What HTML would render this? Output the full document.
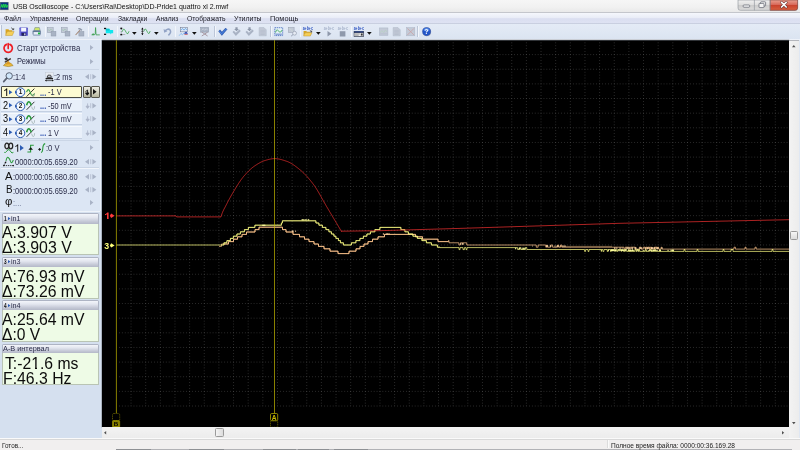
<!DOCTYPE html>
<html><head><meta charset="utf-8"><title>USB Oscilloscope</title>
<style>
html,body{margin:0;padding:0;}
body{width:800px;height:450px;overflow:hidden;background:#d9e4f2;position:relative;font-family:"Liberation Sans",sans-serif;}
.b{position:absolute;box-sizing:border-box;}
.t{position:absolute;white-space:nowrap;line-height:1;transform-origin:0 50%;font-family:"Liberation Sans",sans-serif;}
svg{overflow:visible;}
#w{position:absolute;left:0;top:0;width:800px;height:450px;overflow:hidden;filter:blur(0.45px);will-change:transform;}
</style></head><body><div id="w">
<div class="b" style="left:0.00px;top:0.00px;width:800.00px;height:12.30px;background:linear-gradient(#f6f6f6,#f1f1f1 60%,#e9e9e9);"></div>
<div class="b" style="left:0.00px;top:12.00px;width:800.00px;height:0.70px;background:#c4c6cc;"></div>
<svg class="b" style="left:0.00px;top:1.90px;" width="8.60" height="8.10" viewBox="0 0 8.6 8.1"><rect x="0" y="0" width="8.6" height="8.1" fill="#6a7480"/><rect x="0.5" y="0.6" width="7.6" height="6.8" fill="#0c3484"/><path d="M0.8 5.6 L1.8 2.4 L2.8 5.6 L3.8 2.0 L4.8 5.6 L5.8 2.2 L6.8 5.6 L7.6 3.2" fill="none" stroke="#1fd84a" stroke-width="1.0"/><path d="M0.8 4.2 H7.8" stroke="#1fd84a" stroke-width="0.5" stroke-dasharray="0.8 0.8"/></svg>
<span class="t" style="left:12.60px;top:2.55px;font-size:7.30px;color:#101010;transform:scaleX(0.9584);">USB Oscilloscope - C:\Users\Rai\Desktop\DD-Pride1 quattro xl 2.mwf</span>
<svg class="b" style="left:738.00px;top:0.00px;" width="60.00" height="10.60" viewBox="0 0 60 10.6"><defs><linearGradient id="wg" x1="0" y1="0" x2="0" y2="1"><stop offset="0" stop-color="#f0f0f0"/><stop offset="0.48" stop-color="#dedede"/><stop offset="0.52" stop-color="#cccccc"/><stop offset="1" stop-color="#dcdcdc"/></linearGradient><linearGradient id="wr" x1="0" y1="0" x2="0" y2="1"><stop offset="0" stop-color="#e8a090"/><stop offset="0.45" stop-color="#d8695a"/><stop offset="0.5" stop-color="#c8412c"/><stop offset="1" stop-color="#d86040"/></linearGradient></defs><path d="M0 0 H59.6 V8 Q59.6 10.3 57.2 10.3 H2.4 Q0 10.3 0 8 Z" fill="url(#wg)" stroke="#8a8e96" stroke-width="0.6"/><path d="M32.2 0 H59.6 V8 Q59.6 10.3 57.2 10.3 H32.2 Z" fill="url(#wr)" stroke="#7a3a34" stroke-width="0.6"/><path d="M16.4 0 V10.3 M32.2 0 V10.3" stroke="#8a8e96" stroke-width="0.6"/><rect x="5.2" y="5" width="6.4" height="2.2" rx="0.6" fill="#fafafa" stroke="#5a5e6a" stroke-width="0.7"/><rect x="22.6" y="1.8" width="5" height="4.2" rx="0.6" fill="#f4f4f4" stroke="#5a5e6a" stroke-width="0.7"/><rect x="21" y="3.4" width="5" height="4.2" rx="0.6" fill="#f4f4f4" stroke="#5a5e6a" stroke-width="0.7"/><path d="M43.6 2.4 L48.2 7.0 M48.2 2.4 L43.6 7.0" stroke="#5a2a2a" stroke-width="2.7" stroke-linecap="round"/><path d="M43.6 2.4 L48.2 7.0 M48.2 2.4 L43.6 7.0" stroke="#fcfcfc" stroke-width="1.7" stroke-linecap="round"/></svg>
<div class="b" style="left:0.00px;top:12.70px;width:800.00px;height:10.90px;background:linear-gradient(#f5f7fc 0%,#eaedf7 42%,#dadef0 52%,#dfe3f3 100%);"></div>
<div class="b" style="left:0.00px;top:23.20px;width:800.00px;height:0.60px;background:#c9cfe0;"></div>
<span class="t" style="left:4.40px;top:14.90px;font-size:7.20px;color:#1c1c24;transform:scaleX(0.9604);">Файл</span>
<span class="t" style="left:29.60px;top:14.90px;font-size:7.20px;color:#1c1c24;transform:scaleX(0.9594);">Управление</span>
<span class="t" style="left:76.40px;top:14.90px;font-size:7.20px;color:#1c1c24;transform:scaleX(0.9679);">Операции</span>
<span class="t" style="left:117.60px;top:14.90px;font-size:7.20px;color:#1c1c24;transform:scaleX(0.9434);">Закладки</span>
<span class="t" style="left:155.60px;top:14.90px;font-size:7.20px;color:#1c1c24;transform:scaleX(0.9215);">Анализ</span>
<span class="t" style="left:187.00px;top:14.90px;font-size:7.20px;color:#1c1c24;transform:scaleX(0.9492);">Отображать</span>
<span class="t" style="left:234.00px;top:14.90px;font-size:7.20px;color:#1c1c24;transform:scaleX(0.9654);">Утилиты</span>
<span class="t" style="left:270.00px;top:14.90px;font-size:7.20px;color:#1c1c24;transform:scaleX(1.0213);">Помощь</span>
<div class="b" style="left:0.00px;top:23.80px;width:800.00px;height:15.60px;background:linear-gradient(#e4ebf6,#dbe4f1);"></div>
<div class="b" style="left:0.00px;top:39.00px;width:800.00px;height:0.90px;background:#eef2f9;"></div>
<div class="b" style="left:0.30px;top:25.00px;width:1.60px;height:13.00px;background:#f2f5fb;border-right:0.5px solid #b9c3d6;"></div>
<div class="b" style="left:44.50px;top:26.00px;width:0.70px;height:11.40px;background:#bcc6d8;"></div>
<div class="b" style="left:45.20px;top:26.00px;width:0.60px;height:11.40px;background:#f3f6fb;"></div>
<div class="b" style="left:87.70px;top:26.00px;width:0.70px;height:11.40px;background:#bcc6d8;"></div>
<div class="b" style="left:88.40px;top:26.00px;width:0.60px;height:11.40px;background:#f3f6fb;"></div>
<div class="b" style="left:116.60px;top:26.00px;width:0.70px;height:11.40px;background:#bcc6d8;"></div>
<div class="b" style="left:117.30px;top:26.00px;width:0.60px;height:11.40px;background:#f3f6fb;"></div>
<div class="b" style="left:174.60px;top:26.00px;width:0.70px;height:11.40px;background:#bcc6d8;"></div>
<div class="b" style="left:175.30px;top:26.00px;width:0.60px;height:11.40px;background:#f3f6fb;"></div>
<div class="b" style="left:214.00px;top:26.00px;width:0.70px;height:11.40px;background:#bcc6d8;"></div>
<div class="b" style="left:214.70px;top:26.00px;width:0.60px;height:11.40px;background:#f3f6fb;"></div>
<div class="b" style="left:270.00px;top:26.00px;width:0.70px;height:11.40px;background:#bcc6d8;"></div>
<div class="b" style="left:270.70px;top:26.00px;width:0.60px;height:11.40px;background:#f3f6fb;"></div>
<div class="b" style="left:299.60px;top:26.00px;width:0.70px;height:11.40px;background:#bcc6d8;"></div>
<div class="b" style="left:300.30px;top:26.00px;width:0.60px;height:11.40px;background:#f3f6fb;"></div>
<div class="b" style="left:350.50px;top:26.00px;width:0.70px;height:11.40px;background:#bcc6d8;"></div>
<div class="b" style="left:351.20px;top:26.00px;width:0.60px;height:11.40px;background:#f3f6fb;"></div>
<div class="b" style="left:417.40px;top:26.00px;width:0.70px;height:11.40px;background:#bcc6d8;"></div>
<div class="b" style="left:418.10px;top:26.00px;width:0.60px;height:11.40px;background:#f3f6fb;"></div>
<svg class="b" style="left:5.30px;top:27.00px;" width="9.40" height="9.40" viewBox="0 0 16 16"><path d="M1 4 H6 L7 5.5 H12 V8 H4 L1 14 Z" fill="#d9a520"/><path d="M1 14.5 L4 7.5 H15.5 L12.5 14.5 Z" fill="#f6cf56" stroke="#b98a1c" stroke-width="0.7"/><path d="M10.5 1.2 L14.8 4.6 M14.8 4.6 L14.9 1.9 M14.8 4.6 L12 4.6" stroke="#333" stroke-width="1.2" fill="none"/></svg>
<svg class="b" style="left:18.80px;top:27.00px;" width="9.40" height="9.40" viewBox="0 0 16 16"><rect x="1" y="1" width="14" height="14" rx="1" fill="#4b48c2"/><rect x="3.6" y="1.4" width="8.8" height="6.4" fill="#f4f6ff"/><rect x="4.4" y="10" width="7.6" height="5" fill="#24245c"/><rect x="8.8" y="10.8" width="2.2" height="3.4" fill="#d8dcf4"/><rect x="1" y="1" width="2" height="14" fill="#7a78e0"/></svg>
<svg class="b" style="left:32.20px;top:27.00px;" width="9.40" height="9.40" viewBox="0 0 16 16"><path d="M5 1 H12.5 L14 6 H3.4 Z" fill="#cfe86a" stroke="#5d7088" stroke-width="0.8"/><rect x="1" y="6" width="14" height="7" rx="1" fill="#5f7896"/><rect x="2.6" y="8.6" width="10.8" height="4.8" fill="#e8eef6"/><rect x="10.2" y="9.4" width="3.4" height="3.2" fill="#18b838"/><rect x="2" y="13" width="12" height="1.8" fill="#8aa0ba"/></svg>
<svg class="b" style="left:47.20px;top:27.00px;" width="9.40" height="9.40" viewBox="0 0 16 16"><rect x="0.5" y="1" width="10" height="8.6" fill="#c3cad7" stroke="#8f99ab" stroke-width="0.8"/><path d="M1.5 4 L4 6.4 L6.5 3.4 L9.6 6.6" stroke="#94c2a4" stroke-width="0.9" fill="none"/><rect x="7" y="7.4" width="8.2" height="8" fill="#a9b3c4" stroke="#8f99ab" stroke-width="0.8"/></svg>
<svg class="b" style="left:61.00px;top:27.00px;" width="9.40" height="9.40" viewBox="0 0 16 16"><rect x="0.5" y="1" width="10" height="8.6" fill="#c3cad7" stroke="#8f99ab" stroke-width="0.8"/><path d="M1.5 4 L4 6.4 L6.5 3.4 L9.6 6.6" stroke="#94c2a4" stroke-width="0.9" fill="none"/><rect x="7" y="7.4" width="8.2" height="8" fill="#a9b3c4" stroke="#8f99ab" stroke-width="0.8"/></svg>
<svg class="b" style="left:75.00px;top:27.00px;" width="9.40" height="9.40" viewBox="0 0 16 16"><rect x="6.6" y="7.6" width="8.6" height="7.8" fill="#a9b3c4" stroke="#8f99ab" stroke-width="0.8"/><path d="M1 13.6 L8.6 5.2" stroke="#a58a7a" stroke-width="1.8"/><path d="M5.4 2.2 Q9 0.6 12.6 4.6 L10.6 6.8 Q8.6 3.6 5.4 4 Z" fill="#8f99ab"/></svg>
<svg class="b" style="left:90.80px;top:27.00px;" width="9.40" height="9.40" viewBox="0 0 16 16"><path d="M1 13.4 H5.4 L7.2 12 L7.8 1 L8.6 13.4 H15" stroke="#2f9a44" stroke-width="1.3" fill="none"/><path d="M2 13.4 L3.6 11.2 L5.4 13.4" stroke="#2f9a44" stroke-width="1" fill="#2f9a44"/></svg>
<svg class="b" style="left:104.00px;top:27.00px;" width="9.40" height="9.40" viewBox="0 0 16 16"><path d="M3 3 H9 L10.6 5 H15.6 V10.6 H12.6 L11.6 12.6 L10.4 10.6 H3 Z" fill="#10e6ee"/><path d="M3 3 H9.2 V6 H3 Z" fill="#0fc2cc"/><rect x="0" y="1.4" width="3.6" height="2.2" fill="#111"/><rect x="0" y="11.4" width="3.6" height="2.2" fill="#111"/></svg>
<svg class="b" style="left:119.60px;top:27.00px;" width="9.40" height="9.40" viewBox="0 0 16 16"><path d="M2.2 1.2 V14.6" stroke="#111" stroke-width="1" stroke-dasharray="1.2 1.6"/><rect x="0.6" y="1.2" width="3.2" height="2.4" fill="#111"/><rect x="0.6" y="11.8" width="3.2" height="2.4" fill="#111"/><path d="M4 12.8 H9" stroke="#777" stroke-width="0.8"/><path d="M4 8 Q5.6 0.6 8.4 5.4 T12 11.4 Q13.6 12.8 15.4 7.2" stroke="#30a040" stroke-width="1.3" fill="none"/></svg>
<svg class="b" style="left:132.45px;top:32.00px;" width="4.70" height="2.80" viewBox="0 0 4.7 2.8"><path d="M0 0 H4.7 L2.35 2.8 Z" fill="#111"/></svg>
<svg class="b" style="left:141.40px;top:27.00px;" width="9.40" height="9.40" viewBox="0 0 16 16"><path d="M2.4 1.6 V13.4" stroke="#111" stroke-width="1.1"/><path d="M0.4 4.2 L2.4 1 L4.4 4.2 Z M0.4 10.8 L2.4 14 L4.4 10.8 Z" fill="#111"/><path d="M0.4 7.4 H4.6" stroke="#111" stroke-width="1"/><path d="M5 7.4 Q6.6 0.4 9.2 5.4 T12.6 11 Q14 12.4 15.6 7" stroke="#30a040" stroke-width="1.3" fill="none"/></svg>
<svg class="b" style="left:154.35px;top:32.00px;" width="4.70" height="2.80" viewBox="0 0 4.7 2.8"><path d="M0 0 H4.7 L2.35 2.8 Z" fill="#111"/></svg>
<svg class="b" style="left:163.40px;top:27.00px;" width="9.40" height="9.40" viewBox="0 0 16 16"><path d="M3 7.4 Q8.4 1.2 12.2 5.2 Q14.6 9 9.2 14.2" stroke="#93a4c6" stroke-width="2.6" fill="none"/><path d="M1 3.2 L2 9.8 L7.6 7.4 Z" fill="#93a4c6"/></svg>
<svg class="b" style="left:178.80px;top:27.00px;" width="9.40" height="9.40" viewBox="0 0 16 16"><rect x="2.6" y="0.6" width="11.6" height="7.6" fill="#dfe6f2" stroke="#6a7690" stroke-width="0.9"/><path d="M3.4 5.4 L6 2.6 L8.6 5.4 L11.2 2.4 L13.6 5" stroke="#2a8ae8" stroke-width="1" fill="none"/><path d="M0.6 14.4 L3.4 11 L6 13.4 L9 9.6" stroke="#2a8ae8" stroke-width="1.1" fill="none" stroke-dasharray="1.6 0.8"/><path d="M8.4 11.4 H15.4 L12 7.6 Z" fill="#2a3ca8"/><path d="M9.2 12.8 H14.8" stroke="#c03030" stroke-width="1"/></svg>
<svg class="b" style="left:191.65px;top:32.00px;" width="4.70" height="2.80" viewBox="0 0 4.7 2.8"><path d="M0 0 H4.7 L2.35 2.8 Z" fill="#111"/></svg>
<svg class="b" style="left:200.40px;top:27.00px;" width="9.40" height="9.40" viewBox="0 0 16 16"><rect x="1.2" y="0.8" width="13.6" height="8" fill="#a9b3c4" stroke="#8f99ab" stroke-width="0.9"/><path d="M3 5.6 L5.6 3 L8 5.6 L10.6 3 L13 5.4" stroke="#dfe4ee" stroke-width="0.9" fill="none"/><path d="M3 8.6 L13 15.4 M13 8.6 L3 15.4" stroke="#a89aa4" stroke-width="1.7"/></svg>
<svg class="b" style="left:217.60px;top:27.00px;" width="9.40" height="9.40" viewBox="0 0 16 16"><path d="M1 7.2 L3.6 4.8 L6.6 8.6 L13 1.8 L15.4 4.2 L6.6 14.4 Z" fill="#2d63c4" stroke="#1c428e" stroke-width="0.6"/><path d="M2.4 7.2 L6.4 11.4 L14 3.6" stroke="#6ea0ee" stroke-width="1" fill="none"/></svg>
<svg class="b" style="left:231.60px;top:27.00px;" width="9.40" height="9.40" viewBox="0 0 16 16"><path d="M0.8 8.6 L3.2 6.4 L6.6 10 L12.6 4.4 L15 6.8 L6.6 15.2 Z" fill="#a9b3c4"/><path d="M5.8 0.6 H9.6 V3.4 H11.8 L7.7 7.2 L3.6 3.4 H5.8 Z" fill="#8f99ab"/></svg>
<svg class="b" style="left:245.00px;top:27.00px;" width="9.40" height="9.40" viewBox="0 0 16 16"><path d="M0.8 8.6 L3.2 6.4 L6.6 10 L12.6 4.4 L15 6.8 L6.6 15.2 Z" fill="#a9b3c4"/><path d="M5.8 0.6 H9.6 V3.4 H11.8 L7.7 7.2 L3.6 3.4 H5.8 Z" fill="#8f99ab"/></svg>
<svg class="b" style="left:258.00px;top:27.00px;" width="9.40" height="9.40" viewBox="0 0 16 16"><path d="M2 1 H10.2 L14 4.8 V15 H2 Z" fill="#c3cad7" stroke="#a9b3c4" stroke-width="0.8"/><path d="M4 5.6 H11.6 M4 8 H11.6 M4 10.4 H11.6 M4 12.8 H11.6" stroke="#a9b3c4" stroke-width="0.7"/></svg>
<svg class="b" style="left:273.90px;top:27.00px;" width="9.40" height="9.40" viewBox="0 0 16 16"><rect x="1.4" y="1.2" width="13.4" height="13.4" fill="#e4f0f6" stroke="#2c56b8" stroke-width="1.2" stroke-dasharray="2.2 1.1"/><path d="M2.6 9.4 Q4.6 2.2 7.2 6.2 T11 8.4 Q12.4 9 13.8 5" stroke="#2aa048" stroke-width="1.3" fill="none"/><path d="M2.6 12.2 H13.4" stroke="#2c56b8" stroke-width="1.2"/></svg>
<svg class="b" style="left:287.60px;top:27.00px;" width="9.40" height="9.40" viewBox="0 0 16 16"><rect x="0.8" y="0.8" width="9.6" height="8.6" fill="#c3cad7" stroke="#8f99ab" stroke-width="0.8"/><path d="M1.6 2 L9.4 8.4" stroke="#cfe0d4" stroke-width="0.8"/><circle cx="11.2" cy="10.6" r="3.3" fill="#e6ebf3" stroke="#8f99ab" stroke-width="1.1"/><path d="M8.6 12.8 L5.4 15.6" stroke="#8f99ab" stroke-width="1.6"/></svg>
<svg class="b" style="left:302.80px;top:27.00px;" width="9.40" height="9.40" viewBox="0 0 16 16"><text x="-0.6" y="5.0" font-family="Liberation Sans" font-weight="bold" font-size="8.4" textLength="17.4" lengthAdjust="spacingAndGlyphs" fill="#2a50c0">a+b+c</text><path d="M1 7 H5.6 L6.6 8.2 H12 V10 H4 L1 15 Z" fill="#d9a520"/><path d="M1 15.4 L4 9.6 H15.4 L12.4 15.4 Z" fill="#f6cf56" stroke="#b98a1c" stroke-width="0.7"/><path d="M11.6 5.6 L14.8 8.4 M14.8 8.4 V6.2 M14.8 8.4 H12.6" stroke="#222" stroke-width="1.1" fill="none"/></svg>
<svg class="b" style="left:315.95px;top:32.00px;" width="4.70" height="2.80" viewBox="0 0 4.7 2.8"><path d="M0 0 H4.7 L2.35 2.8 Z" fill="#111"/></svg>
<svg class="b" style="left:324.40px;top:27.00px;" width="9.40" height="9.40" viewBox="0 0 16 16"><text x="-0.6" y="5.0" font-family="Liberation Sans" font-weight="bold" font-size="8.4" textLength="17.4" lengthAdjust="spacingAndGlyphs" fill="#a6b2ca">a+b+c</text><path d="M6 7 L12.6 11.6 L6 16.2 Z" fill="#8f99ab"/></svg>
<svg class="b" style="left:338.40px;top:27.00px;" width="9.40" height="9.40" viewBox="0 0 16 16"><text x="-0.6" y="5.0" font-family="Liberation Sans" font-weight="bold" font-size="8.4" textLength="17.4" lengthAdjust="spacingAndGlyphs" fill="#a6b2ca">a+b+c</text><rect x="3" y="7.2" width="9.6" height="9" fill="#8f99ab"/></svg>
<svg class="b" style="left:353.80px;top:27.00px;" width="9.40" height="9.40" viewBox="0 0 16 16"><text x="-0.6" y="5.0" font-family="Liberation Sans" font-weight="bold" font-size="8.4" textLength="17.4" lengthAdjust="spacingAndGlyphs" fill="#2a50c0">a+b+c</text><rect x="-0.4" y="7" width="17.2" height="9.6" fill="#20283e"/><rect x="0.6" y="10" width="15.2" height="5.6" fill="#f0f0f0"/><rect x="0.4" y="7.6" width="15.6" height="1.5" fill="#3858a8"/><path d="M1.6 11.8 H10 M1.6 14 H8" stroke="#555" stroke-width="0.9"/><rect x="11.6" y="11" width="3.2" height="3.6" fill="#333"/></svg>
<svg class="b" style="left:366.85px;top:32.00px;" width="4.70" height="2.80" viewBox="0 0 4.7 2.8"><path d="M0 0 H4.7 L2.35 2.8 Z" fill="#111"/></svg>
<svg class="b" style="left:378.50px;top:27.00px;" width="9.40" height="9.40" viewBox="0 0 16 16"><rect x="0.8" y="1.6" width="14.4" height="12.6" fill="#c3cad7" stroke="#a9b3c4" stroke-width="0.8"/><path d="M2 10 L5 6 L8 9.4 L11 5 L14 8.6" stroke="#b4d2bc" stroke-width="1" fill="none"/><path d="M1.6 11.8 H14.4" stroke="#a9b3c4" stroke-width="0.7"/></svg>
<svg class="b" style="left:392.20px;top:27.00px;" width="9.40" height="9.40" viewBox="0 0 16 16"><path d="M2 1 H10.2 L14 4.8 V15 H2 Z" fill="#c3cad7" stroke="#a9b3c4" stroke-width="0.8"/><path d="M4 5.6 H11.6 M4 8 H11.6 M4 10.4 H11.6 M4 12.8 H11.6" stroke="#a9b3c4" stroke-width="0.7"/></svg>
<svg class="b" style="left:405.60px;top:27.00px;" width="9.40" height="9.40" viewBox="0 0 16 16"><rect x="1" y="1" width="14" height="14" fill="#c3cad7" stroke="#a9b3c4" stroke-width="0.8"/><path d="M2.4 2.4 L13.6 13.6 M13.6 2.4 L2.4 13.6" stroke="#c9a4a8" stroke-width="1.4"/></svg>
<svg class="b" style="left:422.00px;top:27.00px;" width="9.40" height="9.40" viewBox="0 0 16 16"><circle cx="8.6" cy="9" r="6.8" fill="#9aa2b4" opacity="0.55"/><circle cx="7.8" cy="7.8" r="6.9" fill="#2356c8" stroke="#15378a" stroke-width="0.7"/><ellipse cx="7.8" cy="4.6" rx="5" ry="2.8" fill="#6a9cf0" opacity="0.75"/><text x="7.8" y="11.8" text-anchor="middle" font-family="Liberation Sans" font-weight="bold" font-size="11" fill="#fff">?</text></svg>
<div class="b" style="left:0.00px;top:39.90px;width:101.80px;height:398.00px;background:#d5e0ef;"></div>
<div class="b" style="left:0.00px;top:39.90px;width:99.60px;height:171.60px;background:#dce6f4;"></div>
<div class="b" style="left:99.60px;top:39.90px;width:0.50px;height:171.60px;background:#e9eff8;"></div>
<svg class="b" style="left:2.90px;top:43.20px;" width="10.40" height="10.40" viewBox="0 0 10.4 10.4"><path d="M3.5 1.35 A4.2 4.2 0 1 0 6.9 1.35" fill="none" stroke="#ee1c24" stroke-width="1.7" stroke-linecap="round"/><path d="M5.2 0.5 V5.6" stroke="#ee1c24" stroke-width="1.6" stroke-linecap="round"/></svg>
<span class="t" style="left:16.90px;top:45.10px;font-size:8.20px;color:#2a2c48;transform:scaleX(0.9475);">Старт устройства</span>
<svg class="b" style="left:89.60px;top:45.20px;" width="3.40" height="5.20" viewBox="0 0 3.4 5.2"><path d="M0 0 L3.4 2.6 L0 5.2 Z" fill="#a9b3c6"/></svg>
<svg class="b" style="left:3.20px;top:57.00px;" width="10.60" height="9.60" viewBox="0 0 10.6 9.6"><path d="M0.4 8.6 Q2.6 5.4 5.2 5.6 Q8.2 5.8 10.2 8.6 Q5.2 10.6 0.4 8.6 Z" fill="#f0c040" stroke="#8a6a1c" stroke-width="0.5"/><path d="M2.2 7.4 L5 3.6 L8.2 7.2 Z" fill="#d89a28"/><path d="M1.8 5.2 L7.8 1.6" stroke="#3c2c20" stroke-width="1.3"/><path d="M1.2 1.2 L4 0.4 L5 2.6 L2.6 3.6 Z" fill="#30343c"/></svg>
<span class="t" style="left:16.90px;top:58.30px;font-size:8.20px;color:#2a2c48;transform:scaleX(0.9174);">Режимы</span>
<svg class="b" style="left:89.60px;top:58.80px;" width="3.40" height="5.20" viewBox="0 0 3.4 5.2"><path d="M0 0 L3.4 2.6 L0 5.2 Z" fill="#a9b3c6"/></svg>
<div class="b" style="left:1.20px;top:69.30px;width:97.60px;height:0.70px;background:#f3f6fb;"></div>
<div class="b" style="left:1.20px;top:68.70px;width:97.60px;height:0.60px;background:#cbd6e6;"></div>
<svg class="b" style="left:2.80px;top:71.80px;" width="10.20" height="10.40" viewBox="0 0 10.2 10.4"><circle cx="6.2" cy="3.9" r="3.2" fill="#cfe6fa" stroke="#5a6272" stroke-width="1"/><path d="M3.8 6.2 L0.7 9.6" stroke="#5a6272" stroke-width="1.7" stroke-linecap="round"/></svg>
<span class="t" style="left:12.80px;top:72.90px;font-size:9.00px;color:#2a2c48;transform:scaleX(0.8127);">:1:4</span>
<svg class="b" style="left:45.20px;top:72.40px;" width="8.60" height="9.60" viewBox="0 0 8.6 9.6"><rect x="0.4" y="0.2" width="7.8" height="4" fill="#e6ebf2" stroke="#b8c0cc" stroke-width="0.4"/><path d="M2.2 5.4 L3 3.2 H5.6 L6.4 5.4 Z" fill="none" stroke="#222" stroke-width="0.8"/><path d="M0.6 6.6 H8" stroke="#222" stroke-width="1.4"/><path d="M0.2 8.6 H8.4" stroke="#222" stroke-width="0.7"/><path d="M0 8.6 L1.6 7.6 V9.6 Z M8.6 8.6 L7 7.6 V9.6 Z" fill="#222"/></svg>
<span class="t" style="left:54.00px;top:72.90px;font-size:9.00px;color:#2a2c48;transform:scaleX(0.8271);">:2 ms</span>
<svg class="b" style="left:85.40px;top:74.10px;" width="11.40" height="5.40" viewBox="0 0 11.4 5.4"><path d="M4 0 L0 2.7 L4 5.4 Z M7.4 0 L11.4 2.7 L7.4 5.4 Z" fill="#a9b3c6"/><path d="M5.7 0.2 V5.2" stroke="#a9b3c6" stroke-width="0.7"/></svg>
<div class="b" style="left:1.40px;top:86.00px;width:81.00px;height:12.30px;background:#fdfbd2;border:0.8px solid #4a4a44;border-radius:1px;"></div>
<div class="b" style="left:82.60px;top:85.70px;width:8.50px;height:12.70px;background:linear-gradient(#eeeee4,#d4d4c4 50%,#b4b49c);border:0.7px solid #55554c;border-radius:1px;"></div>
<div class="b" style="left:91.00px;top:85.70px;width:8.50px;height:12.70px;background:linear-gradient(#eeeee4,#d4d4c4 50%,#b4b49c);border:0.7px solid #55554c;border-radius:1px;"></div>
<svg class="b" style="left:84.80px;top:89.55px;" width="4.20" height="5.20" viewBox="0 0 4.2 5.2"><path d="M2.6 0 V3.4 M0.6 3 H4 L2.3 5.2 Z" stroke="#111" stroke-width="0.9" fill="#111"/><path d="M0.4 1.8 L2.6 0 " stroke="#111" stroke-width="0.9"/></svg>
<svg class="b" style="left:93.40px;top:89.45px;" width="3.60" height="5.40" viewBox="0 0 3.6 5.4"><path d="M0 0 L3.6 2.7 L0 5.4 Z" fill="#111"/></svg>
<svg class="b" style="left:0;top:0" width="800" height="450" viewBox="0 0 800 450"><path transform="translate(2.977 95.950) scale(11.3208 -10.5556)" d="M0.373 0 L0.285 0 L0.285 0.560 Q0.253 0.530 0.201 0.499 Q0.149 0.469 0.108 0.454 L0.108 0.539 Q0.182 0.574 0.238 0.624 Q0.293 0.673 0.316 0.720 L0.373 0.720 Z" fill="#111"/></svg>
<svg class="b" style="left:8.90px;top:89.95px;" width="3.40" height="4.60" viewBox="0 0 3.4 4.6"><path d="M0 0 L3.4 2.3 L0 4.6 Z" fill="#2c5cb4"/></svg>
<svg class="b" style="left:15.00px;top:87.05px;" width="10.60" height="10.40" viewBox="0 0 10.6 10.4"><circle cx="5.4" cy="5.2" r="4.4" fill="#f4f8fd" stroke="#2c5cb4" stroke-width="1"/><path d="M0 3.6 L2.2 5.2 L0 6.8 Z" fill="#2c5cb4"/><text x="5.5" y="7.5" text-anchor="middle" font-family="Liberation Sans" font-weight="bold" font-size="6.4" fill="#111">1</text></svg>
<svg class="b" style="left:26.00px;top:87.95px;" width="9.40" height="9.40" viewBox="0 0 9.4 9.4"><path d="M0.6 8.6 L8.4 0.6" stroke="#222" stroke-width="0.9"/><path d="M0.6 4.2 Q2.2 -1 4.2 4.4 T8.6 5.6" stroke="#2a9a3c" stroke-width="1.1" fill="none"/><path d="M5.6 6 Q6.4 9.2 7.6 8.6 Q8.6 8 8.6 5.6" stroke="#999" stroke-width="0.7" fill="none"/></svg>
<span class="t" style="left:40.00px;top:88.55px;font-size:9.00px;color:#2c50b0;font-weight:bold;transform:scaleX(0.8266);">...</span>
<span class="t" style="left:48.40px;top:88.25px;font-size:9.00px;color:#2a2c48;transform:scaleX(0.8239);">-1 V</span>
<div class="b" style="left:1.40px;top:99.30px;width:81.00px;height:12.70px;background:#e9f0fa;border-bottom:0.6px solid #c4d0e2;border-top:0.5px solid #f6f9fd;"></div>
<svg class="b" style="left:85.40px;top:102.95px;" width="11.40" height="5.40" viewBox="0 0 11.4 5.4"><path d="M2.6 0.4 V3.6 M1 3.2 H4.2 L2.6 5.4 Z" stroke="#a9b3c6" stroke-width="0.8" fill="#a9b3c6"/><path d="M5.7 0.2 V5.2" stroke="#a9b3c6" stroke-width="0.7"/><path d="M7.4 0 L11.4 2.7 L7.4 5.4 Z" fill="#a9b3c6"/></svg>
<span class="t" style="left:3.10px;top:100.80px;font-size:10.30px;color:#0a0a0a;transform:scaleX(0.8903);">2</span>
<svg class="b" style="left:8.90px;top:103.45px;" width="3.40" height="4.60" viewBox="0 0 3.4 4.6"><path d="M0 0 L3.4 2.3 L0 4.6 Z" fill="#2c5cb4"/></svg>
<svg class="b" style="left:15.00px;top:100.55px;" width="10.60" height="10.40" viewBox="0 0 10.6 10.4"><circle cx="5.4" cy="5.2" r="4.4" fill="#f4f8fd" stroke="#2c5cb4" stroke-width="1"/><path d="M0 3.6 L2.2 5.2 L0 6.8 Z" fill="#2c5cb4"/><text x="5.5" y="7.5" text-anchor="middle" font-family="Liberation Sans" font-weight="bold" font-size="6.4" fill="#111">2</text></svg>
<svg class="b" style="left:26.00px;top:101.45px;" width="9.40" height="9.40" viewBox="0 0 9.4 9.4"><path d="M0.6 8.8 L8.4 0.8" stroke="#222" stroke-width="0.9"/><path d="M0.6 4.2 Q2.6 -2.6 5.4 4.2" stroke="#2a9a3c" stroke-width="1.6" fill="none"/><path d="M5.6 5.6 Q6.4 9.2 7.6 8.6 Q8.6 8 8.6 5.2" stroke="#9aa" stroke-width="0.7" fill="none"/></svg>
<span class="t" style="left:40.00px;top:102.05px;font-size:9.00px;color:#2c50b0;font-weight:bold;transform:scaleX(0.8266);">...</span>
<span class="t" style="left:48.40px;top:101.75px;font-size:9.00px;color:#2a2c48;transform:scaleX(0.8204);">-50 mV</span>
<div class="b" style="left:1.40px;top:112.60px;width:81.00px;height:12.80px;background:#e9f0fa;border-bottom:0.6px solid #c4d0e2;border-top:0.5px solid #f6f9fd;"></div>
<svg class="b" style="left:85.40px;top:116.30px;" width="11.40" height="5.40" viewBox="0 0 11.4 5.4"><path d="M2.6 0.4 V3.6 M1 3.2 H4.2 L2.6 5.4 Z" stroke="#a9b3c6" stroke-width="0.8" fill="#a9b3c6"/><path d="M5.7 0.2 V5.2" stroke="#a9b3c6" stroke-width="0.7"/><path d="M7.4 0 L11.4 2.7 L7.4 5.4 Z" fill="#a9b3c6"/></svg>
<span class="t" style="left:3.10px;top:114.15px;font-size:10.30px;color:#0a0a0a;transform:scaleX(0.8903);">3</span>
<svg class="b" style="left:8.90px;top:116.80px;" width="3.40" height="4.60" viewBox="0 0 3.4 4.6"><path d="M0 0 L3.4 2.3 L0 4.6 Z" fill="#2c5cb4"/></svg>
<svg class="b" style="left:15.00px;top:113.90px;" width="10.60" height="10.40" viewBox="0 0 10.6 10.4"><circle cx="5.4" cy="5.2" r="4.4" fill="#f4f8fd" stroke="#2c5cb4" stroke-width="1"/><path d="M0 3.6 L2.2 5.2 L0 6.8 Z" fill="#2c5cb4"/><text x="5.5" y="7.5" text-anchor="middle" font-family="Liberation Sans" font-weight="bold" font-size="6.4" fill="#111">3</text></svg>
<svg class="b" style="left:26.00px;top:114.80px;" width="9.40" height="9.40" viewBox="0 0 9.4 9.4"><path d="M0.6 8.8 L8.4 0.8" stroke="#222" stroke-width="0.9"/><path d="M0.6 4.2 Q2.6 -2.6 5.4 4.2" stroke="#2a9a3c" stroke-width="1.6" fill="none"/><path d="M5.6 5.6 Q6.4 9.2 7.6 8.6 Q8.6 8 8.6 5.2" stroke="#9aa" stroke-width="0.7" fill="none"/></svg>
<span class="t" style="left:40.00px;top:115.40px;font-size:9.00px;color:#2c50b0;font-weight:bold;transform:scaleX(0.8266);">...</span>
<span class="t" style="left:48.40px;top:115.10px;font-size:9.00px;color:#2a2c48;transform:scaleX(0.8204);">-50 mV</span>
<div class="b" style="left:1.40px;top:126.20px;width:81.00px;height:12.80px;background:#e9f0fa;border-bottom:0.6px solid #c4d0e2;border-top:0.5px solid #f6f9fd;"></div>
<svg class="b" style="left:85.40px;top:129.90px;" width="11.40" height="5.40" viewBox="0 0 11.4 5.4"><path d="M2.6 0.4 V3.6 M1 3.2 H4.2 L2.6 5.4 Z" stroke="#a9b3c6" stroke-width="0.8" fill="#a9b3c6"/><path d="M5.7 0.2 V5.2" stroke="#a9b3c6" stroke-width="0.7"/><path d="M7.4 0 L11.4 2.7 L7.4 5.4 Z" fill="#a9b3c6"/></svg>
<span class="t" style="left:3.10px;top:127.75px;font-size:10.30px;color:#0a0a0a;transform:scaleX(0.8903);">4</span>
<svg class="b" style="left:8.90px;top:130.40px;" width="3.40" height="4.60" viewBox="0 0 3.4 4.6"><path d="M0 0 L3.4 2.3 L0 4.6 Z" fill="#2c5cb4"/></svg>
<svg class="b" style="left:15.00px;top:127.50px;" width="10.60" height="10.40" viewBox="0 0 10.6 10.4"><circle cx="5.4" cy="5.2" r="4.4" fill="#f4f8fd" stroke="#2c5cb4" stroke-width="1"/><path d="M0 3.6 L2.2 5.2 L0 6.8 Z" fill="#2c5cb4"/><text x="5.5" y="7.5" text-anchor="middle" font-family="Liberation Sans" font-weight="bold" font-size="6.4" fill="#111">4</text></svg>
<svg class="b" style="left:26.00px;top:128.40px;" width="9.40" height="9.40" viewBox="0 0 9.4 9.4"><path d="M0.6 8.8 L8.4 0.8" stroke="#222" stroke-width="0.9"/><path d="M0.6 4.2 Q2.6 -2.6 5.4 4.2" stroke="#2a9a3c" stroke-width="1.6" fill="none"/><path d="M5.6 5.6 Q6.4 9.2 7.6 8.6 Q8.6 8 8.6 5.2" stroke="#9aa" stroke-width="0.7" fill="none"/></svg>
<span class="t" style="left:40.00px;top:129.00px;font-size:9.00px;color:#2c50b0;font-weight:bold;transform:scaleX(0.8266);">...</span>
<span class="t" style="left:48.40px;top:128.70px;font-size:9.00px;color:#2a2c48;transform:scaleX(0.7995);">1 V</span>
<div class="b" style="left:1.20px;top:140.10px;width:97.60px;height:0.70px;background:#f3f6fb;"></div>
<div class="b" style="left:1.20px;top:139.50px;width:97.60px;height:0.60px;background:#cbd6e6;"></div>
<svg class="b" style="left:4.00px;top:142.60px;" width="9.60" height="11.00" viewBox="0 0 9.6 11"><ellipse cx="2.8" cy="3" rx="1.9" ry="2.8" fill="#dfe4ec" stroke="#222" stroke-width="1.3"/><ellipse cx="6.8" cy="3" rx="1.9" ry="2.8" fill="#dfe4ec" stroke="#222" stroke-width="1.3"/><path d="M0.3 9.4 Q1.6 10 2.8 8.2 T4.9 6.6 Q6.2 7.2 7 9 T9.4 9.4" stroke="#2a9a3c" stroke-width="1" fill="none"/></svg>
<svg class="b" style="left:0;top:0" width="800" height="450" viewBox="0 0 800 450"><path transform="translate(14.118 151.800) scale(10.9434 -10.5556)" d="M0.373 0 L0.285 0 L0.285 0.560 Q0.253 0.530 0.201 0.499 Q0.149 0.469 0.108 0.454 L0.108 0.539 Q0.182 0.574 0.238 0.624 Q0.293 0.673 0.316 0.720 L0.373 0.720 Z" fill="#111"/></svg>
<svg class="b" style="left:20.00px;top:145.10px;" width="3.80" height="5.80" viewBox="0 0 3.8 5.8"><path d="M0 0 L3.8 2.9 L0 5.8 Z" fill="#2c5cb4"/></svg>
<svg class="b" style="left:27.00px;top:143.60px;" width="7.40" height="8.80" viewBox="0 0 7.4 8.8"><path d="M0.4 8 H3.6 V1.2 H6.8" stroke="#2a9a3c" stroke-width="1.1" fill="none"/><path d="M1.4 5.8 H6 L3.7 3.2 Z" fill="#111"/></svg>
<svg class="b" style="left:37.80px;top:143.20px;" width="7.60" height="9.80" viewBox="0 0 7.6 9.8"><path d="M0.2 6.4 H3 M1.6 5 V7.8" stroke="#111" stroke-width="0.9"/><path d="M3 9.4 Q4.6 9.2 4.8 5.2 T7.2 0.6" stroke="#2a9a3c" stroke-width="1.1" fill="none"/></svg>
<span class="t" style="left:45.80px;top:143.90px;font-size:9.00px;color:#2a2c48;transform:scaleX(0.8370);">:0 V</span>
<svg class="b" style="left:89.60px;top:145.00px;" width="3.40" height="5.20" viewBox="0 0 3.4 5.2"><path d="M0 0 L3.4 2.6 L0 5.2 Z" fill="#a9b3c6"/></svg>
<svg class="b" style="left:2.80px;top:155.80px;" width="11.00" height="10.40" viewBox="0 0 11 10.4"><path d="M3.0 4.8 Q4.0 0.4 5.4 1.6 T7.4 5.2 Q8.6 8.8 10.3 4.0" stroke="#2a9a3c" stroke-width="1.05" fill="none"/><path d="M0.8 9.6 H10.4" stroke="#111" stroke-width="0.8" stroke-dasharray="1.3 0.8"/><path d="M0.9 9.2 L3.0 5.6" stroke="#111" stroke-width="0.7" stroke-dasharray="1.1 0.7"/><path d="M2.5 5.4 L3.5 6.5 L2.5 7.6 L1.5 6.5 Z M0.8 8.7 L1.7 9.6 L0.8 10.5 L-0.1 9.6 Z M10.2 8.7 L11.1 9.6 L10.2 10.5 L9.3 9.6 Z" fill="#111"/></svg>
<span class="t" style="left:14.60px;top:156.70px;font-size:9.60px;color:#2a2c48;transform:scaleX(0.7817);">0000:00:05.659.20</span>
<svg class="b" style="left:85.40px;top:158.50px;" width="11.40" height="5.40" viewBox="0 0 11.4 5.4"><path d="M4 0 L0 2.7 L4 5.4 Z M7.4 0 L11.4 2.7 L7.4 5.4 Z" fill="#a9b3c6"/><path d="M5.7 0.2 V5.2" stroke="#a9b3c6" stroke-width="0.7"/></svg>
<div class="b" style="left:1.20px;top:167.90px;width:97.60px;height:0.70px;background:#f3f6fb;"></div>
<div class="b" style="left:1.20px;top:167.30px;width:97.60px;height:0.60px;background:#cbd6e6;"></div>
<span class="t" style="left:4.90px;top:170.90px;font-size:11.40px;color:#111;transform:scaleX(0.9863);">A</span>
<span class="t" style="left:12.60px;top:172.10px;font-size:9.60px;color:#2a2c48;transform:scaleX(0.7807);">:0000:00:05.680.80</span>
<svg class="b" style="left:85.40px;top:173.70px;" width="11.40" height="5.40" viewBox="0 0 11.4 5.4"><path d="M4 0 L0 2.7 L4 5.4 Z M7.4 0 L11.4 2.7 L7.4 5.4 Z" fill="#a9b3c6"/><path d="M5.7 0.2 V5.2" stroke="#a9b3c6" stroke-width="0.7"/></svg>
<span class="t" style="left:5.60px;top:184.30px;font-size:11.40px;color:#111;transform:scaleX(0.8679);">B</span>
<span class="t" style="left:12.60px;top:185.50px;font-size:9.60px;color:#2a2c48;transform:scaleX(0.7807);">:0000:00:05.659.20</span>
<svg class="b" style="left:85.40px;top:187.10px;" width="11.40" height="5.40" viewBox="0 0 11.4 5.4"><path d="M4 0 L0 2.7 L4 5.4 Z M7.4 0 L11.4 2.7 L7.4 5.4 Z" fill="#a9b3c6"/><path d="M5.7 0.2 V5.2" stroke="#a9b3c6" stroke-width="0.7"/></svg>
<span class="t" style="left:5.00px;top:196.30px;font-size:11.40px;color:#111;transform:scaleX(1.0011);">φ</span>
<span class="t" style="left:12.80px;top:199.10px;font-size:8.60px;color:#7a84a0;transform:scaleX(0.8790);">:...</span>
<svg class="b" style="left:89.60px;top:200.20px;" width="3.40" height="5.20" viewBox="0 0 3.4 5.2"><path d="M0 0 L3.4 2.6 L0 5.2 Z" fill="#a9b3c6"/></svg>
<div class="b" style="left:0.00px;top:211.20px;width:99.60px;height:0.70px;background:#eef3fa;"></div>
<div class="b" style="left:1.60px;top:213.40px;width:97.80px;height:10.30px;background:linear-gradient(#f3f5fa 0%,#e3e6ef 35%,#c4c8d6 75%,#b4b8c8 100%);border:0.5px solid #aeb4c4;border-bottom:none;border-radius:1.6px 1.6px 0 0;"></div>
<span class="t" style="left:3.60px;top:215.15px;font-size:7.20px;color:#111;font-weight:bold;transform:scaleX(0.6493);">1</span>
<svg class="b" style="left:7.80px;top:217.15px;" width="2.40" height="3.20" viewBox="0 0 2.4 3.2"><path d="M0 0 L2.4 1.6 L0 3.2 Z" fill="#2c5cb4"/></svg>
<span class="t" style="left:10.80px;top:215.15px;font-size:7.20px;color:#2a2c48;transform:scaleX(0.9991);">in1</span>
<div class="b" style="left:1.60px;top:223.70px;width:97.80px;height:31.70px;background:#eefbe6;border:0.5px solid #b9c4b4;border-top:none;"></div>
<span class="t" style="left:2.40px;top:225.25px;font-size:15.90px;color:#0c0c0c;transform:scaleX(0.9995);">A:3.907 V</span>
<span class="t" style="left:2.40px;top:240.45px;font-size:15.90px;color:#0c0c0c;transform:scaleX(0.9993);">Δ:3.903 V</span>
<div class="b" style="left:1.60px;top:256.60px;width:97.80px;height:10.00px;background:linear-gradient(#f3f5fa 0%,#e3e6ef 35%,#c4c8d6 75%,#b4b8c8 100%);border:0.5px solid #aeb4c4;border-bottom:none;border-radius:1.6px 1.6px 0 0;"></div>
<span class="t" style="left:3.60px;top:258.20px;font-size:7.20px;color:#111;font-weight:bold;transform:scaleX(0.6493);">3</span>
<svg class="b" style="left:7.80px;top:260.20px;" width="2.40" height="3.20" viewBox="0 0 2.4 3.2"><path d="M0 0 L2.4 1.6 L0 3.2 Z" fill="#2c5cb4"/></svg>
<span class="t" style="left:10.80px;top:258.20px;font-size:7.20px;color:#2a2c48;transform:scaleX(0.9991);">in3</span>
<div class="b" style="left:1.60px;top:266.60px;width:97.80px;height:32.00px;background:#eefbe6;border:0.5px solid #b9c4b4;border-top:none;"></div>
<span class="t" style="left:2.40px;top:268.65px;font-size:15.90px;color:#0c0c0c;transform:scaleX(0.9942);">A:76.93 mV</span>
<span class="t" style="left:2.40px;top:283.85px;font-size:15.90px;color:#0c0c0c;transform:scaleX(0.9940);">Δ:73.26 mV</span>
<div class="b" style="left:1.60px;top:300.20px;width:97.80px;height:10.00px;background:linear-gradient(#f3f5fa 0%,#e3e6ef 35%,#c4c8d6 75%,#b4b8c8 100%);border:0.5px solid #aeb4c4;border-bottom:none;border-radius:1.6px 1.6px 0 0;"></div>
<span class="t" style="left:3.60px;top:301.80px;font-size:7.20px;color:#111;font-weight:bold;transform:scaleX(0.6493);">4</span>
<svg class="b" style="left:7.80px;top:303.80px;" width="2.40" height="3.20" viewBox="0 0 2.4 3.2"><path d="M0 0 L2.4 1.6 L0 3.2 Z" fill="#2c5cb4"/></svg>
<span class="t" style="left:10.80px;top:301.80px;font-size:7.20px;color:#2a2c48;transform:scaleX(0.9991);">in4</span>
<div class="b" style="left:1.60px;top:310.20px;width:97.80px;height:32.00px;background:#eefbe6;border:0.5px solid #b9c4b4;border-top:none;"></div>
<span class="t" style="left:2.40px;top:312.05px;font-size:15.90px;color:#0c0c0c;transform:scaleX(0.9942);">A:25.64 mV</span>
<span class="t" style="left:2.40px;top:327.25px;font-size:15.90px;color:#0c0c0c;transform:scaleX(0.9819);">Δ:0 V</span>
<div class="b" style="left:1.60px;top:343.80px;width:97.80px;height:9.60px;background:linear-gradient(#f3f5fa 0%,#e3e6ef 35%,#c4c8d6 75%,#b4b8c8 100%);border:0.5px solid #aeb4c4;border-bottom:none;border-radius:1.6px 1.6px 0 0;"></div>
<span class="t" style="left:3.20px;top:345.20px;font-size:7.20px;color:#2a2c48;transform:scaleX(1.0182);">A-B интервал</span>
<div class="b" style="left:1.60px;top:353.40px;width:97.80px;height:32.00px;background:#eefbe6;border:0.5px solid #b9c4b4;border-top:none;"></div>
<span class="t" style="left:4.60px;top:356.05px;font-size:15.90px;color:#0c0c0c;transform:scaleX(0.9889);">T:-21.6 ms</span>
<span class="t" style="left:3.00px;top:371.25px;font-size:15.90px;color:#0c0c0c;transform:scaleX(0.9938);">F:46.3 Hz</span>
<div class="b" style="left:31.40px;top:366.70px;width:3.60px;height:2.60px;background:#eefbe6;"></div>
<div class="b" style="left:37.00px;top:366.70px;width:2.60px;height:2.60px;background:#eefbe6;"></div>
<svg class="b" style="left:0;top:0" width="800" height="450" viewBox="0 0 800 450"><rect x="101.80" y="40.20" width="687.40" height="387.20" fill="#000"/><rect x="101.80" y="39.80" width="687.40" height="0.5" fill="#3c4048"/><path d="M131.04 42.59 V406.02" stroke="#787878" stroke-width="0.586" stroke-dasharray="0.5857 2.3428"/><path d="M145.69 42.59 V406.02" stroke="#787878" stroke-width="0.586" stroke-dasharray="0.5857 2.3428"/><path d="M160.33 42.59 V406.02" stroke="#787878" stroke-width="0.586" stroke-dasharray="0.5857 2.3428"/><path d="M174.97 42.59 V406.02" stroke="#787878" stroke-width="0.586" stroke-dasharray="0.5857 2.3428"/><path d="M189.61 42.59 V406.02" stroke="#787878" stroke-width="0.586" stroke-dasharray="0.5857 2.3428"/><path d="M204.25 42.59 V406.02" stroke="#787878" stroke-width="0.586" stroke-dasharray="0.5857 2.3428"/><path d="M218.90 42.59 V406.02" stroke="#787878" stroke-width="0.586" stroke-dasharray="0.5857 2.3428"/><path d="M233.54 42.59 V406.02" stroke="#787878" stroke-width="0.586" stroke-dasharray="0.5857 2.3428"/><path d="M248.18 42.59 V406.02" stroke="#787878" stroke-width="0.586" stroke-dasharray="0.5857 2.3428"/><path d="M262.83 42.59 V406.02" stroke="#787878" stroke-width="0.586" stroke-dasharray="0.5857 2.3428"/><path d="M277.47 42.59 V406.02" stroke="#787878" stroke-width="0.586" stroke-dasharray="0.5857 2.3428"/><path d="M292.11 42.59 V406.02" stroke="#787878" stroke-width="0.586" stroke-dasharray="0.5857 2.3428"/><path d="M306.75 42.59 V406.02" stroke="#787878" stroke-width="0.586" stroke-dasharray="0.5857 2.3428"/><path d="M321.39 42.59 V406.02" stroke="#787878" stroke-width="0.586" stroke-dasharray="0.5857 2.3428"/><path d="M336.04 42.59 V406.02" stroke="#787878" stroke-width="0.586" stroke-dasharray="0.5857 2.3428"/><path d="M350.68 42.59 V406.02" stroke="#787878" stroke-width="0.586" stroke-dasharray="0.5857 2.3428"/><path d="M365.32 42.59 V406.02" stroke="#787878" stroke-width="0.586" stroke-dasharray="0.5857 2.3428"/><path d="M379.97 42.59 V406.02" stroke="#787878" stroke-width="0.586" stroke-dasharray="0.5857 2.3428"/><path d="M394.61 42.59 V406.02" stroke="#787878" stroke-width="0.586" stroke-dasharray="0.5857 2.3428"/><path d="M409.25 42.59 V406.02" stroke="#787878" stroke-width="0.586" stroke-dasharray="0.5857 2.3428"/><path d="M423.89 42.59 V406.02" stroke="#787878" stroke-width="0.586" stroke-dasharray="0.5857 2.3428"/><path d="M438.53 42.59 V406.02" stroke="#787878" stroke-width="0.586" stroke-dasharray="0.5857 2.3428"/><path d="M453.18 42.59 V406.02" stroke="#787878" stroke-width="0.586" stroke-dasharray="0.5857 2.3428"/><path d="M467.82 42.59 V406.02" stroke="#787878" stroke-width="0.586" stroke-dasharray="0.5857 2.3428"/><path d="M482.46 42.59 V406.02" stroke="#787878" stroke-width="0.586" stroke-dasharray="0.5857 2.3428"/><path d="M497.11 42.59 V406.02" stroke="#787878" stroke-width="0.586" stroke-dasharray="0.5857 2.3428"/><path d="M511.75 42.59 V406.02" stroke="#787878" stroke-width="0.586" stroke-dasharray="0.5857 2.3428"/><path d="M526.39 42.59 V406.02" stroke="#787878" stroke-width="0.586" stroke-dasharray="0.5857 2.3428"/><path d="M541.03 42.59 V406.02" stroke="#787878" stroke-width="0.586" stroke-dasharray="0.5857 2.3428"/><path d="M555.67 42.59 V406.02" stroke="#787878" stroke-width="0.586" stroke-dasharray="0.5857 2.3428"/><path d="M570.32 42.59 V406.02" stroke="#787878" stroke-width="0.586" stroke-dasharray="0.5857 2.3428"/><path d="M584.96 42.59 V406.02" stroke="#787878" stroke-width="0.586" stroke-dasharray="0.5857 2.3428"/><path d="M599.60 42.59 V406.02" stroke="#787878" stroke-width="0.586" stroke-dasharray="0.5857 2.3428"/><path d="M614.25 42.59 V406.02" stroke="#787878" stroke-width="0.586" stroke-dasharray="0.5857 2.3428"/><path d="M628.89 42.59 V406.02" stroke="#787878" stroke-width="0.586" stroke-dasharray="0.5857 2.3428"/><path d="M643.53 42.59 V406.02" stroke="#787878" stroke-width="0.586" stroke-dasharray="0.5857 2.3428"/><path d="M658.17 42.59 V406.02" stroke="#787878" stroke-width="0.586" stroke-dasharray="0.5857 2.3428"/><path d="M672.81 42.59 V406.02" stroke="#787878" stroke-width="0.586" stroke-dasharray="0.5857 2.3428"/><path d="M687.46 42.59 V406.02" stroke="#787878" stroke-width="0.586" stroke-dasharray="0.5857 2.3428"/><path d="M702.10 42.59 V406.02" stroke="#787878" stroke-width="0.586" stroke-dasharray="0.5857 2.3428"/><path d="M716.74 42.59 V406.02" stroke="#787878" stroke-width="0.586" stroke-dasharray="0.5857 2.3428"/><path d="M731.38 42.59 V406.02" stroke="#787878" stroke-width="0.586" stroke-dasharray="0.5857 2.3428"/><path d="M746.03 42.59 V406.02" stroke="#787878" stroke-width="0.586" stroke-dasharray="0.5857 2.3428"/><path d="M760.67 42.59 V406.02" stroke="#787878" stroke-width="0.586" stroke-dasharray="0.5857 2.3428"/><path d="M775.31 42.59 V406.02" stroke="#787878" stroke-width="0.586" stroke-dasharray="0.5857 2.3428"/><path d="M119.04 54.60 H789.20" stroke="#787878" stroke-width="0.586" stroke-dasharray="0.5857 2.3428"/><path d="M119.04 69.24 H789.20" stroke="#787878" stroke-width="0.586" stroke-dasharray="0.5857 2.3428"/><path d="M119.04 83.89 H789.20" stroke="#787878" stroke-width="0.586" stroke-dasharray="0.5857 2.3428"/><path d="M119.04 98.53 H789.20" stroke="#787878" stroke-width="0.586" stroke-dasharray="0.5857 2.3428"/><path d="M119.04 113.17 H789.20" stroke="#787878" stroke-width="0.586" stroke-dasharray="0.5857 2.3428"/><path d="M119.04 127.81 H789.20" stroke="#787878" stroke-width="0.586" stroke-dasharray="0.5857 2.3428"/><path d="M119.04 142.46 H789.20" stroke="#787878" stroke-width="0.586" stroke-dasharray="0.5857 2.3428"/><path d="M119.04 157.10 H789.20" stroke="#787878" stroke-width="0.586" stroke-dasharray="0.5857 2.3428"/><path d="M119.04 171.74 H789.20" stroke="#787878" stroke-width="0.586" stroke-dasharray="0.5857 2.3428"/><path d="M119.04 186.38 H789.20" stroke="#787878" stroke-width="0.586" stroke-dasharray="0.5857 2.3428"/><path d="M119.04 201.03 H789.20" stroke="#787878" stroke-width="0.586" stroke-dasharray="0.5857 2.3428"/><path d="M119.04 215.67 H789.20" stroke="#787878" stroke-width="0.586" stroke-dasharray="0.5857 2.3428"/><path d="M119.04 230.31 H789.20" stroke="#787878" stroke-width="0.586" stroke-dasharray="0.5857 2.3428"/><path d="M119.04 244.95 H789.20" stroke="#787878" stroke-width="0.586" stroke-dasharray="0.5857 2.3428"/><path d="M119.04 259.60 H789.20" stroke="#787878" stroke-width="0.586" stroke-dasharray="0.5857 2.3428"/><path d="M119.04 274.24 H789.20" stroke="#787878" stroke-width="0.586" stroke-dasharray="0.5857 2.3428"/><path d="M119.04 288.88 H789.20" stroke="#787878" stroke-width="0.586" stroke-dasharray="0.5857 2.3428"/><path d="M119.04 303.52 H789.20" stroke="#787878" stroke-width="0.586" stroke-dasharray="0.5857 2.3428"/><path d="M119.04 318.17 H789.20" stroke="#787878" stroke-width="0.586" stroke-dasharray="0.5857 2.3428"/><path d="M119.04 332.81 H789.20" stroke="#787878" stroke-width="0.586" stroke-dasharray="0.5857 2.3428"/><path d="M119.04 347.45 H789.20" stroke="#787878" stroke-width="0.586" stroke-dasharray="0.5857 2.3428"/><path d="M119.04 362.09 H789.20" stroke="#787878" stroke-width="0.586" stroke-dasharray="0.5857 2.3428"/><path d="M119.04 376.74 H789.20" stroke="#787878" stroke-width="0.586" stroke-dasharray="0.5857 2.3428"/><path d="M119.04 391.38 H789.20" stroke="#787878" stroke-width="0.586" stroke-dasharray="0.5857 2.3428"/><path d="M119.04 406.02 H789.20" stroke="#787878" stroke-width="0.586" stroke-dasharray="0.5857 2.3428"/><defs><filter id="bl" x="-2%" y="-2%" width="104%" height="104%"><feGaussianBlur stdDeviation="0.5"/></filter></defs><g filter="url(#bl)"><path d="M219.00 246.40 H221.50 V244.00 H228.50 V241.60 H233.50 V239.20 H237.50 V236.80 H242.00 V234.40 H246.50 V232.00 H255.00 V229.60 H259.00 V227.20 H282.50 V229.60 H286.00 V232.00 H293.00 V234.40 H299.50 V236.80 H304.50 V239.20 H309.00 V241.60 H314.00 V244.00 H318.50 V246.40 H324.00 V248.80 H330.00 V251.20 H338.00 V253.60 H349.00 V251.20 H356.00 V248.80 H360.00 V246.40 H364.00 V244.00 H368.00 V241.60 H372.50 V239.20 H378.00 V236.80 H384.50 V234.40 H415.50 V236.80 H422.50 V239.20 H438.00 V241.60 H448.50 V240.5 H449 V242.8 H458.88 V245.00 H460.35 V242.80 H466.77 V245.00 H467.00 V245.00 H536.26 V247.20 H538.12 V245.00 H545.77 V247.20 H546.73 V245.00 H547.35 V247.20 H550.62 V245.00 H552.62 V247.20 H557.55 V245.00 H558.62 V247.20 H560.51 V245.00 H561.77 V247.20 H568.00 V247.20 H623.98 V249.10 H625.23 V247.20 H629.55 V249.10 H630.37 V247.20 H635.35 V249.10 H639.37 V247.20 H641.10 V249.10 H643.37 V247.20 H645.28 V249.10 H646.13 V247.20 H647.08 V249.10 H647.61 V247.20 H649.26 V249.10 H649.61 V247.20 H650.68 V249.10 H651.46 V247.20 H652.11 V249.10 H654.01 V247.20 H654.67 V249.10 H655.02 V247.20 H657.52 V249.10 H658.00 V247.20 H658.59 V249.10 H661.09 V247.20 H661.71 V249.10 H670.00 V249.10 H676 H690.00 V249.10 H734 V247.2 H735.4 V249.1 H745 V247.2 H746 V249.1 H755 V247.2 H756.2 V249.1 H789.2" fill="none" stroke="#ffc48c" stroke-width="0.72"/><path d="M224.00 244.00 H228.50 V241.60 H233.50 V239.20 H237.50 V236.80 H242.00 V234.40 H246.50 V232.00 H255.00 V229.60 H259.00 V227.20 H282.50 V229.60 H286.00 V232.00 H293.00 V234.40 H299.50 V236.80 H304.50 V239.20 H309.00 V241.60 H314.00 V244.00 H318.50 V246.40 H324.00 V248.80 H330.00 V251.20 H338.00 V253.60 H349.00 V251.20 H356.00 V248.80 H360.00 V246.40 H364.00 V244.00 H368.00 V241.60 H372.50 V239.20 H378.00 V236.80 H384.50 V234.40 H415.50 V236.80 H422.50 V239.20 H438.00 V241.60 H448.50" fill="none" stroke="#ffc48c" stroke-width="0.75"/><path d="M556 246.4 H612" fill="none" stroke="#ffc48c" stroke-width="0.7" opacity="0.55"/><path d="M116.40 245.00 H223.90 V242.80 H226.90 V240.60 H230.40 V238.40 H233.40 V236.20 H236.90 V234.00 H240.40 V231.80 H244.40 V229.60 H248.40 V227.40 H254.90 V225.20 H281.40 V223.00 H282.40 V220.80 H315.90 V223.00 H318.90 V225.20 H322.40 V227.40 H325.90 V229.60 H328.90 V231.80 H331.40 V234.00 H333.90 V236.20 H335.90 V238.40 H338.40 V240.60 H340.40 V242.80 H343.40 V245.00 H351.40 V242.80 H355.90 V240.60 H359.90 V238.40 H363.40 V236.20 H366.90 V234.00 H370.40 V231.80 H374.90 V229.60 H379.90 V227.40 H400.90 V229.60 H404.90 V231.80 H408.40 V234.00 H412.90 V236.20 H417.40 V238.40 H421.90 V240.60 H426.40 V242.80 H431.40 V245.00 H437.40 V247.20 H439.90 V247.6 H448.00 V247.60 H459 V249.6 H460 V247.6 H463 V249.6 H464.4 V247.6 H466 V249.6 H467 V247.6 H517.61 V249.50 H519.53 V247.60 H520.79 V249.50 H525.39 V247.60 H526.79 V249.50 H528.00 V249.50 H584.6 V251.4 H585.6 V249.5 H588 V251.4 H589 V249.5 H601.20 V251.40 H601.52 V249.50 H602.88 V251.40 H603.96 V249.50 H607.23 V251.40 H608.14 V249.50 H610.49 V251.40 H611.17 V249.50 H614.78 V251.40 H615.30 V249.50 H616.70 V251.40 H617.76 V249.50 H621.14 V251.40 H621.50 V249.50 H623.56 V251.40 H624.61 V249.50 H626.71 V251.40 H628.42 V249.50 H628.80 V251.40 H632.52 V249.50 H632.91 V251.40 H634.84 V249.50 H635.94 V251.40 H636.74 V249.50 H638.39 V251.40 H638.97 V249.50 H639.65 V251.40 H645.31 V249.50 H646.12 V251.40 H649.48 V249.50 H650.83 V251.40 H654.64 V249.50 H655.40 V251.40 H672.00 V251.40 H684 V249.5 H685 V251.4 H697 V249.5 H698 V251.4 H723 V249.5 H724 V251.4 H731 V249.5 H733 V251.4 H772 V249.5 H773 V251.4 H789.2" fill="none" stroke="#ffff84" stroke-width="0.72"/><path d="M222.40 245.00 H223.90 V242.80 H226.90 V240.60 H230.40 V238.40 H233.40 V236.20 H236.90 V234.00 H240.40 V231.80 H244.40 V229.60 H248.40 V227.40 H254.90 V225.20 H281.40 V223.00 H282.40 V220.80 H315.90 V223.00 H318.90 V225.20 H322.40 V227.40 H325.90 V229.60 H328.90 V231.80 H331.40 V234.00 H333.90 V236.20 H335.90 V238.40 H338.40 V240.60 H340.40 V242.80 H343.40 V245.00 H351.40 V242.80 H355.90 V240.60 H359.90 V238.40 H363.40 V236.20 H366.90 V234.00 H370.40 V231.80 H374.90 V229.60 H379.90 V227.40 H400.90 V229.60 H404.90 V231.80 H408.40 V234.00 H412.90 V236.20 H417.40 V238.40 H421.90 V240.60 H426.40 V242.80 H431.40 V245.00 H437.40 V247.20 H439.90" fill="none" stroke="#ffff84" stroke-width="0.60"/><rect x="264.00" y="224.67" width="0.69" height="1.45" fill="#ffffa0" opacity="0.87"/><rect x="262.50" y="224.93" width="1.44" height="0.94" fill="#ffffa0" opacity="0.79"/><rect x="263.12" y="224.73" width="0.81" height="1.34" fill="#ffffa0" opacity="0.93"/><rect x="262.29" y="224.90" width="0.76" height="1.00" fill="#ffffa0" opacity="0.88"/><rect x="264.40" y="224.79" width="1.04" height="1.23" fill="#ffffa0" opacity="0.89"/><rect x="303.36" y="219.16" width="1.35" height="1.27" fill="#ffffa0" opacity="0.75"/><rect x="305.35" y="219.30" width="1.89" height="1.00" fill="#ffffa0" opacity="0.75"/><rect x="301.57" y="219.19" width="1.99" height="1.22" fill="#ffffa0" opacity="0.95"/><rect x="307.96" y="218.94" width="0.93" height="1.72" fill="#ffffa0" opacity="0.67"/><rect x="307.66" y="219.35" width="1.82" height="0.90" fill="#ffffa0" opacity="0.62"/><rect x="305.12" y="219.24" width="1.17" height="1.12" fill="#ffffa0" opacity="0.66"/><rect x="621.63" y="249.77" width="2.17" height="1.26" fill="#ffffa0" opacity="0.73"/><rect x="615.03" y="249.87" width="0.90" height="1.06" fill="#ffffa0" opacity="0.90"/><rect x="653.17" y="249.80" width="0.87" height="1.20" fill="#ffffa0" opacity="0.78"/><rect x="633.21" y="249.97" width="0.92" height="0.86" fill="#ffffa0" opacity="0.87"/><rect x="607.79" y="249.62" width="1.24" height="1.56" fill="#ffffa0" opacity="0.82"/><rect x="624.50" y="249.50" width="1.88" height="1.79" fill="#ffffa0" opacity="0.74"/><rect x="653.10" y="249.81" width="1.43" height="1.19" fill="#ffffa0" opacity="0.95"/><rect x="646.32" y="249.73" width="0.82" height="1.34" fill="#ffffa0" opacity="0.70"/><rect x="629.73" y="249.83" width="1.81" height="1.14" fill="#ffffa0" opacity="0.79"/><rect x="614.29" y="249.56" width="1.31" height="1.69" fill="#ffffa0" opacity="0.84"/><rect x="621.77" y="249.70" width="1.05" height="1.40" fill="#ffffa0" opacity="0.74"/><rect x="659.25" y="249.54" width="1.07" height="1.72" fill="#ffffa0" opacity="0.64"/><rect x="648.08" y="249.91" width="1.98" height="0.99" fill="#ffffa0" opacity="0.73"/><rect x="642.66" y="249.95" width="1.26" height="0.91" fill="#ffffa0" opacity="0.86"/><rect x="629.20" y="249.97" width="0.90" height="0.85" fill="#ffffa0" opacity="0.76"/><rect x="617.54" y="249.92" width="1.90" height="0.96" fill="#ffffa0" opacity="0.56"/><rect x="654.46" y="249.57" width="1.27" height="1.65" fill="#ffffa0" opacity="0.78"/><rect x="652.85" y="249.96" width="2.10" height="0.88" fill="#ffffa0" opacity="0.66"/><rect x="610.99" y="249.65" width="2.13" height="1.49" fill="#ffffa0" opacity="0.92"/><rect x="659.12" y="249.56" width="1.87" height="1.67" fill="#ffffa0" opacity="0.93"/><rect x="636.56" y="249.51" width="1.91" height="1.77" fill="#ffffa0" opacity="0.74"/><rect x="613.00" y="249.97" width="1.66" height="0.86" fill="#ffffa0" opacity="0.67"/><rect x="622.61" y="249.99" width="1.89" height="0.82" fill="#ffffa0" opacity="0.68"/><rect x="618.40" y="249.56" width="1.66" height="1.68" fill="#ffffa0" opacity="0.74"/><rect x="650.64" y="249.75" width="1.28" height="1.30" fill="#ffffa0" opacity="0.68"/><rect x="611.77" y="249.70" width="2.02" height="1.40" fill="#ffffa0" opacity="0.66"/><rect x="632.32" y="249.98" width="1.25" height="0.84" fill="#ffffa0" opacity="0.83"/><rect x="652.07" y="249.93" width="1.57" height="0.95" fill="#ffffa0" opacity="0.72"/><rect x="612.22" y="249.85" width="0.87" height="1.09" fill="#ffffa0" opacity="0.91"/><rect x="650.58" y="249.54" width="1.87" height="1.73" fill="#ffffa0" opacity="0.59"/><rect x="613.14" y="250.00" width="0.67" height="0.80" fill="#ffffa0" opacity="0.81"/><rect x="624.51" y="249.57" width="1.50" height="1.67" fill="#ffffa0" opacity="0.66"/><rect x="614.68" y="249.99" width="1.91" height="0.82" fill="#ffffa0" opacity="0.92"/><rect x="620.82" y="249.89" width="0.65" height="1.02" fill="#ffffa0" opacity="0.58"/><rect x="650.69" y="249.97" width="0.69" height="0.85" fill="#ffffa0" opacity="0.80"/><rect x="612.60" y="249.61" width="1.14" height="1.59" fill="#ffffa0" opacity="0.72"/><rect x="643.76" y="249.93" width="1.05" height="0.93" fill="#ffffa0" opacity="0.58"/><rect x="650.31" y="249.96" width="0.80" height="0.88" fill="#ffffa0" opacity="0.61"/><rect x="631.29" y="249.75" width="1.70" height="1.29" fill="#ffffa0" opacity="0.80"/><rect x="629.83" y="249.70" width="1.79" height="1.40" fill="#ffffa0" opacity="0.62"/><rect x="620.16" y="249.78" width="2.19" height="1.25" fill="#ffffa0" opacity="0.82"/><rect x="610.35" y="249.65" width="1.68" height="1.50" fill="#ffffa0" opacity="0.61"/><rect x="656.48" y="249.83" width="1.23" height="1.15" fill="#ffffa0" opacity="0.82"/><rect x="655.21" y="249.72" width="1.94" height="1.36" fill="#ffffa0" opacity="0.57"/><rect x="629.15" y="249.58" width="1.59" height="1.64" fill="#ffffa0" opacity="0.63"/><rect x="627.94" y="249.66" width="1.63" height="1.49" fill="#ffffa0" opacity="0.57"/><rect x="670.51" y="249.57" width="0.78" height="1.65" fill="#ffffa0" opacity="0.90"/><rect x="667.35" y="249.83" width="1.47" height="1.15" fill="#ffffa0" opacity="0.71"/><rect x="671.06" y="249.77" width="1.65" height="1.26" fill="#ffffa0" opacity="0.69"/><rect x="671.94" y="249.54" width="2.10" height="1.72" fill="#ffffa0" opacity="0.92"/><rect x="518.64" y="247.76" width="1.93" height="1.49" fill="#ffffa0" opacity="0.92"/><rect x="523.56" y="247.70" width="1.93" height="1.60" fill="#ffffa0" opacity="0.78"/><rect x="523.06" y="247.91" width="0.72" height="1.18" fill="#ffffa0" opacity="0.87"/><rect x="515.21" y="247.79" width="1.13" height="1.43" fill="#ffffa0" opacity="0.73"/><rect x="514.94" y="247.77" width="0.87" height="1.47" fill="#ffffa0" opacity="0.77"/><rect x="521.65" y="247.63" width="2.05" height="1.73" fill="#ffffa0" opacity="0.67"/><rect x="661.56" y="247.38" width="1.44" height="1.44" fill="#ffd8a8" opacity="0.59"/><rect x="634.49" y="247.23" width="2.12" height="1.74" fill="#ffd8a8" opacity="0.72"/><rect x="625.79" y="247.45" width="2.14" height="1.30" fill="#ffd8a8" opacity="0.93"/><rect x="613.98" y="247.56" width="1.55" height="1.08" fill="#ffd8a8" opacity="0.55"/><rect x="639.35" y="247.47" width="2.12" height="1.26" fill="#ffd8a8" opacity="0.64"/><rect x="651.15" y="247.32" width="2.00" height="1.56" fill="#ffd8a8" opacity="0.65"/><rect x="655.58" y="247.47" width="1.84" height="1.26" fill="#ffd8a8" opacity="0.85"/><rect x="614.05" y="247.51" width="0.93" height="1.19" fill="#ffd8a8" opacity="0.92"/><rect x="650.97" y="247.29" width="1.67" height="1.62" fill="#ffd8a8" opacity="0.84"/><rect x="615.51" y="247.32" width="2.03" height="1.56" fill="#ffd8a8" opacity="0.64"/><rect x="645.31" y="247.69" width="1.32" height="0.83" fill="#ffd8a8" opacity="0.87"/><rect x="631.27" y="247.29" width="1.60" height="1.62" fill="#ffd8a8" opacity="0.92"/><rect x="641.49" y="247.70" width="1.32" height="0.81" fill="#ffd8a8" opacity="0.60"/><rect x="652.67" y="247.44" width="0.89" height="1.33" fill="#ffd8a8" opacity="0.62"/><rect x="656.44" y="247.31" width="0.94" height="1.57" fill="#ffd8a8" opacity="0.73"/><rect x="653.96" y="247.22" width="1.17" height="1.76" fill="#ffd8a8" opacity="0.75"/><rect x="634.74" y="247.55" width="1.26" height="1.10" fill="#ffd8a8" opacity="0.82"/><rect x="621.73" y="247.22" width="0.85" height="1.76" fill="#ffd8a8" opacity="0.63"/><rect x="657.39" y="247.40" width="0.73" height="1.39" fill="#ffd8a8" opacity="0.59"/><rect x="632.19" y="247.39" width="1.13" height="1.41" fill="#ffd8a8" opacity="0.55"/><rect x="627.50" y="247.32" width="1.82" height="1.56" fill="#ffd8a8" opacity="0.87"/><rect x="644.30" y="247.48" width="1.81" height="1.23" fill="#ffd8a8" opacity="0.68"/><rect x="657.46" y="247.63" width="1.24" height="0.93" fill="#ffd8a8" opacity="0.93"/><rect x="619.20" y="247.60" width="1.83" height="1.01" fill="#ffd8a8" opacity="0.89"/><rect x="646.95" y="247.40" width="2.11" height="1.40" fill="#ffd8a8" opacity="0.89"/><rect x="639.76" y="247.50" width="2.02" height="1.21" fill="#ffd8a8" opacity="0.92"/><rect x="553.98" y="245.68" width="2.07" height="0.84" fill="#ffd8a8" opacity="0.70"/><rect x="562.66" y="245.43" width="1.03" height="1.34" fill="#ffd8a8" opacity="0.72"/><rect x="532.34" y="245.45" width="0.67" height="1.29" fill="#ffd8a8" opacity="0.70"/><rect x="562.18" y="245.62" width="1.12" height="0.96" fill="#ffd8a8" opacity="0.60"/><rect x="545.98" y="245.25" width="2.18" height="1.70" fill="#ffd8a8" opacity="0.76"/><rect x="549.66" y="245.33" width="1.59" height="1.54" fill="#ffd8a8" opacity="0.57"/><rect x="563.90" y="245.47" width="2.00" height="1.27" fill="#ffd8a8" opacity="0.69"/><rect x="550.04" y="245.54" width="1.41" height="1.12" fill="#ffd8a8" opacity="0.60"/><rect x="556.67" y="245.37" width="2.02" height="1.45" fill="#ffd8a8" opacity="0.67"/><rect x="462.49" y="243.03" width="0.90" height="1.74" fill="#ffd8a8" opacity="0.65"/><rect x="461.82" y="243.13" width="1.64" height="1.54" fill="#ffd8a8" opacity="0.73"/><rect x="460.10" y="243.09" width="1.26" height="1.62" fill="#ffd8a8" opacity="0.66"/><rect x="462.27" y="243.32" width="1.04" height="1.17" fill="#ffd8a8" opacity="0.68"/><rect x="385.74" y="233.19" width="1.93" height="1.62" fill="#ffd8a8" opacity="0.62"/><rect x="382.84" y="233.26" width="1.15" height="1.48" fill="#ffd8a8" opacity="0.84"/><rect x="388.83" y="233.49" width="0.95" height="1.02" fill="#ffd8a8" opacity="0.95"/><rect x="387.06" y="233.50" width="1.82" height="1.00" fill="#ffd8a8" opacity="0.80"/><rect x="291.76" y="230.58" width="1.38" height="1.24" fill="#ffd8a8" opacity="0.89"/><rect x="292.16" y="230.65" width="1.78" height="1.11" fill="#ffd8a8" opacity="0.79"/><rect x="295.14" y="230.59" width="0.97" height="1.22" fill="#ffd8a8" opacity="0.94"/><path d="M116.40 215.90 L176.00 215.90 L176.60 216.90 L221.00 216.90 L221.00 216.80 L221.50 215.24 L222.00 213.69 L222.50 212.35 L223.00 211.20 L223.50 210.15 L224.00 209.17 L224.50 208.22 L225.00 207.28 L225.50 206.31 L226.00 205.34 L226.50 204.37 L227.00 203.41 L227.50 202.45 L228.00 201.50 L228.50 200.56 L229.00 199.62 L229.50 198.69 L230.00 197.77 L230.50 196.86 L231.00 195.96 L231.50 195.08 L232.00 194.20 L232.50 193.35 L233.00 192.50 L233.50 191.67 L234.00 190.84 L234.50 190.01 L235.00 189.19 L235.50 188.36 L236.00 187.55 L236.50 186.73 L237.00 185.93 L237.50 185.13 L238.00 184.34 L238.50 183.56 L239.00 182.80 L239.50 182.04 L240.00 181.30 L240.50 180.57 L241.00 179.86 L241.50 179.17 L242.00 178.49 L242.50 177.84 L243.00 177.20 L243.50 176.59 L244.00 176.00 L244.50 175.42 L245.00 174.86 L245.50 174.30 L246.00 173.75 L246.50 173.20 L247.00 172.67 L247.50 172.15 L248.00 171.63 L248.50 171.13 L249.00 170.64 L249.50 170.15 L250.00 169.68 L250.50 169.23 L251.00 168.78 L251.50 168.35 L252.00 167.93 L252.50 167.52 L253.00 167.13 L253.50 166.75 L254.00 166.38 L254.50 166.04 L255.00 165.70 L255.50 165.37 L256.00 165.04 L256.50 164.72 L257.00 164.40 L257.50 164.09 L258.00 163.78 L258.50 163.48 L259.00 163.19 L259.50 162.91 L260.00 162.63 L260.50 162.36 L261.00 162.11 L261.50 161.86 L262.00 161.63 L262.50 161.40 L263.00 161.19 L263.50 161.00 L264.00 160.81 L264.50 160.64 L265.00 160.49 L265.50 160.34 L266.00 160.21 L266.50 160.07 L267.00 159.93 L267.50 159.79 L268.00 159.66 L268.50 159.53 L269.00 159.41 L269.50 159.29 L270.00 159.17 L270.50 159.07 L271.00 158.97 L271.50 158.88 L272.00 158.81 L272.50 158.74 L273.00 158.69 L273.50 158.64 L274.00 158.62 L274.50 158.60 L275.00 158.60 L275.50 158.62 L276.00 158.65 L276.50 158.69 L277.00 158.74 L277.50 158.81 L278.00 158.88 L278.50 158.97 L279.00 159.07 L279.50 159.17 L280.00 159.28 L280.50 159.40 L281.00 159.53 L281.50 159.67 L282.00 159.81 L282.50 159.95 L283.00 160.10 L283.50 160.26 L284.00 160.42 L284.50 160.58 L285.00 160.74 L285.50 160.90 L286.00 161.07 L286.50 161.23 L287.00 161.40 L287.50 161.59 L288.00 161.78 L288.50 162.00 L289.00 162.23 L289.50 162.47 L290.00 162.73 L290.50 163.00 L291.00 163.28 L291.50 163.58 L292.00 163.89 L292.50 164.20 L293.00 164.53 L293.50 164.86 L294.00 165.21 L294.50 165.56 L295.00 165.92 L295.50 166.29 L296.00 166.66 L296.50 167.04 L297.00 167.42 L297.50 167.81 L298.00 168.21 L298.50 168.60 L299.00 169.00 L299.50 169.40 L300.00 169.80 L300.50 170.21 L301.00 170.63 L301.50 171.06 L302.00 171.50 L302.50 171.96 L303.00 172.42 L303.50 172.90 L304.00 173.39 L304.50 173.89 L305.00 174.40 L305.50 174.92 L306.00 175.45 L306.50 175.98 L307.00 176.53 L307.50 177.09 L308.00 177.66 L308.50 178.24 L309.00 178.82 L309.50 179.42 L310.00 180.02 L310.50 180.63 L311.00 181.25 L311.50 181.88 L312.00 182.51 L312.50 183.16 L313.00 183.81 L313.50 184.47 L314.00 185.15 L314.50 185.85 L315.00 186.58 L315.50 187.34 L316.00 188.11 L316.50 188.90 L317.00 189.71 L317.50 190.53 L318.00 191.37 L318.50 192.23 L319.00 193.09 L319.50 193.96 L320.00 194.84 L320.50 195.73 L321.00 196.62 L321.50 197.52 L322.00 198.42 L322.50 199.32 L323.00 200.22 L323.50 201.12 L324.00 202.01 L324.50 202.90 L325.00 203.78 L325.50 204.65 L326.00 205.51 L326.50 206.36 L327.00 207.20 L327.50 208.04 L328.00 208.88 L328.50 209.72 L329.00 210.56 L329.50 211.40 L330.00 212.24 L330.50 213.08 L331.00 213.92 L331.50 214.76 L332.00 215.59 L332.50 216.43 L333.00 217.27 L333.50 218.11 L334.00 218.95 L334.50 219.79 L335.00 220.63 L335.50 221.47 L336.00 222.31 L336.50 223.15 L337.00 223.98 L337.50 224.82 L338.00 225.66 L338.50 226.50 L339.00 227.34 L339.50 228.18 L340.00 229.02 L340.50 229.86 L341.00 230.70 L341.50 231.54 L341.30 231.20 L380.00 230.70 L460.00 228.40 L620.00 223.30 L789.20 219.70" fill="none" stroke="#ee3030" stroke-width="0.72" stroke-linejoin="round"/></g><path d="M116.40 40.20 V413.2" stroke="#cfc400" stroke-width="0.66"/><path d="M274.50 40.20 V413.2" stroke="#cfc400" stroke-width="0.66"/><rect x="112.5" y="413.5" width="7.2" height="7.2" rx="1.2" fill="none" stroke="#8a8200" stroke-width="0.6" stroke-dasharray="1.2 0.6"/><rect x="112.5" y="420.6" width="7.2" height="6.6" rx="0.8" fill="#8a8200" stroke="#b4aa00" stroke-width="0.5"/><text x="116.1" y="426.3" text-anchor="middle" font-family="Liberation Sans" font-weight="bold" font-size="6.2" fill="#000">B</text><rect x="270.5" y="413.5" width="7.2" height="7.2" rx="1.2" fill="#000" stroke="#b4aa00" stroke-width="0.8"/><text x="274.1" y="419.8" text-anchor="middle" font-family="Liberation Sans" font-weight="bold" font-size="6.6" fill="#c8bc00">A</text><rect x="270.5" y="420.8" width="7.2" height="6.4" rx="0.8" fill="none" stroke="#8a8200" stroke-width="0.6" stroke-dasharray="1.2 0.6"/><path transform="translate(104.094 219.000) scale(11.4650 -9.1667)" d="M0.393 0 L0.256 0 L0.256 0.517 Q0.181 0.447 0.079 0.413 L0.079 0.538 Q0.133 0.555 0.196 0.604 Q0.259 0.653 0.282 0.719 L0.393 0.719 Z" fill="#ff3a3a"/><path d="M109.8 215.8 L111.2 213.6 L114.6 215.8 L111.2 218 Z" fill="#ff3a3a"/><text x="104.2" y="248.6" font-family="Liberation Sans" font-weight="bold" font-size="9.2" textLength="4.9" lengthAdjust="spacingAndGlyphs" fill="#ffff7a">3</text><path d="M109.8 245.4 L111.2 243.2 L114.6 245.4 L111.2 247.6 Z" fill="#ffff7a"/></svg>
<div class="b" style="left:101.80px;top:427.40px;width:687.40px;height:10.40px;background:linear-gradient(#f3f3f3,#ececec);"></div>
<div class="b" style="left:215.20px;top:428.00px;width:9.20px;height:9.20px;background:linear-gradient(90deg,#f4f4f4,#dcdcdc);border:0.6px solid #9a9a9a;border-radius:1.4px;"></div>
<svg class="b" style="left:104.40px;top:430.80px;" width="2.20" height="3.60" viewBox="0 0 2.2 3.6"><path d="M2.2 0 L0 1.8 L2.2 3.6 Z" fill="#505050"/></svg>
<svg class="b" style="left:782.40px;top:430.80px;" width="2.20" height="3.60" viewBox="0 0 2.2 3.6"><path d="M0 0 L2.2 1.8 L0 3.6 Z" fill="#505050"/></svg>
<div class="b" style="left:789.20px;top:40.20px;width:9.40px;height:397.60px;background:linear-gradient(90deg,#f3f3f3,#ececec);"></div>
<div class="b" style="left:789.20px;top:39.60px;width:9.40px;height:0.90px;background:#b4b6bc;"></div>
<div class="b" style="left:789.60px;top:231.00px;width:8.80px;height:9.00px;background:linear-gradient(#f6f6f6,#dcdcdc);border:0.6px solid #9a9a9a;border-radius:1.4px;"></div>
<svg class="b" style="left:792.20px;top:44.60px;" width="3.60" height="2.20" viewBox="0 0 3.6 2.2"><path d="M0 2.2 L1.8 0 L3.6 2.2 Z" fill="#505050"/></svg>
<svg class="b" style="left:792.20px;top:421.80px;" width="3.60" height="2.20" viewBox="0 0 3.6 2.2"><path d="M0 0 L1.8 2.2 L3.6 0 Z" fill="#505050"/></svg>
<div class="b" style="left:798.60px;top:40.00px;width:1.40px;height:398.00px;background:#dfe7f3;"></div>
<div class="b" style="left:0.00px;top:437.80px;width:800.00px;height:12.20px;background:#f1efef;"></div>
<div class="b" style="left:0.00px;top:437.80px;width:800.00px;height:0.70px;background:#fafafa;"></div>
<div class="b" style="left:0.00px;top:438.60px;width:800.00px;height:0.60px;background:#d8d8d8;"></div>
<div class="b" style="left:116.00px;top:448.70px;width:676.00px;height:1.30px;background:#b2b2b6;"></div>
<div class="b" style="left:116.00px;top:448.60px;width:35.00px;height:1.40px;background:#8e9094;"></div>
<div class="b" style="left:189.00px;top:448.60px;width:35.00px;height:1.40px;background:#8e9094;"></div>
<div class="b" style="left:262.50px;top:448.60px;width:33.10px;height:1.40px;background:#8e9094;"></div>
<div class="b" style="left:298.00px;top:448.60px;width:30.70px;height:1.40px;background:#8e9094;"></div>
<div class="b" style="left:333.60px;top:448.60px;width:34.10px;height:1.40px;background:#8e9094;"></div>
<div class="b" style="left:607.20px;top:439.60px;width:0.60px;height:8.80px;background:#dcdcdc;"></div>
<div class="b" style="left:607.80px;top:439.60px;width:0.60px;height:8.80px;background:#fbfbfb;"></div>
<span class="t" style="left:2.20px;top:441.80px;font-size:7.00px;color:#202020;transform:scaleX(0.9012);">Готов...</span>
<span class="t" style="left:610.50px;top:441.80px;font-size:7.00px;color:#202020;transform:scaleX(0.9371);">Полное время файла: 0000:00:36.169.28</span>
</div></body></html>
